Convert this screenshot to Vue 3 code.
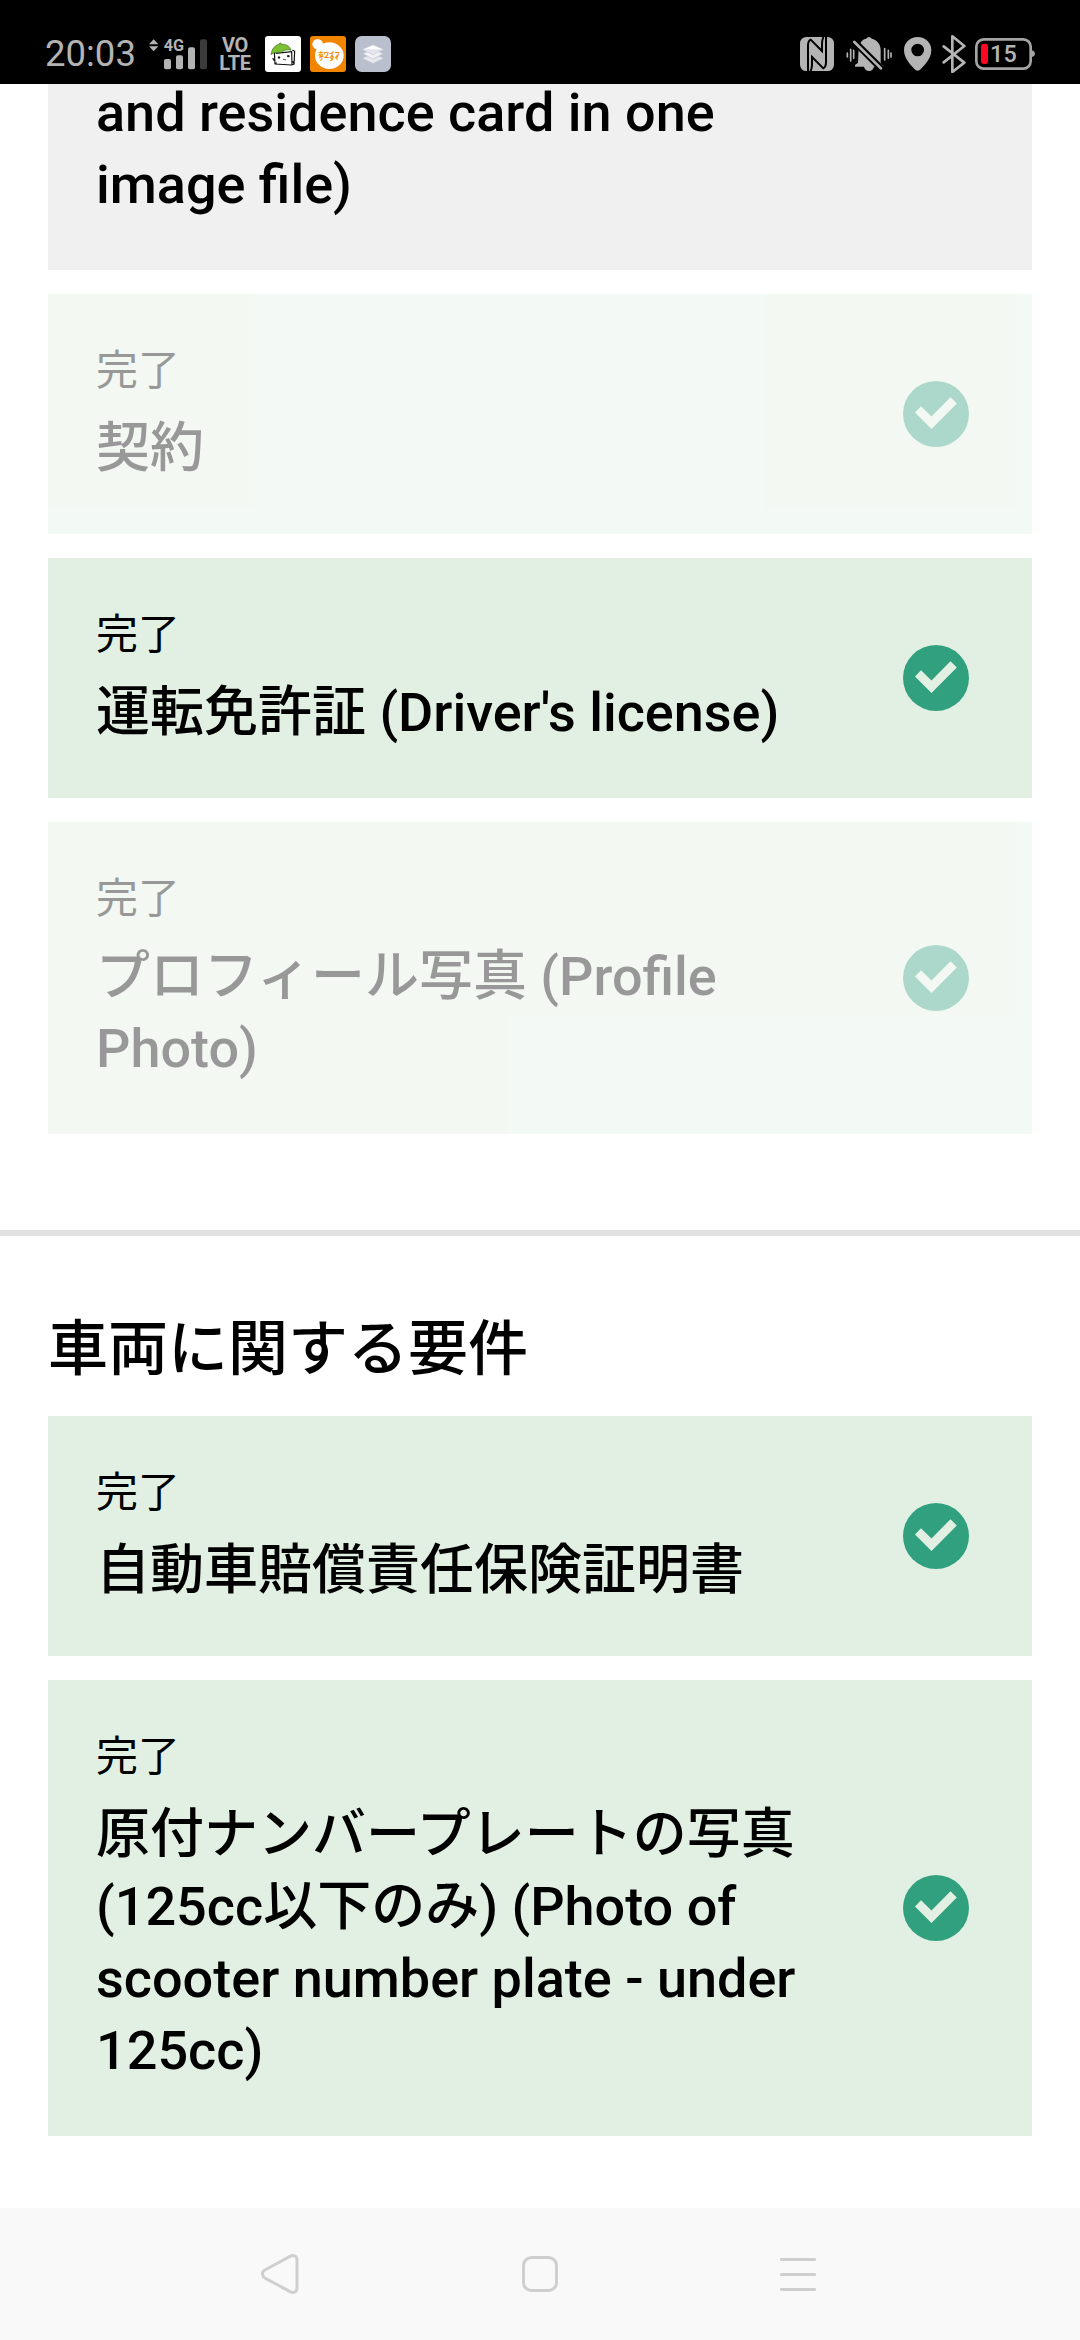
<script setup>
const driverItems = [
  { title: '契約', faded: true },
  { title: "運転免許証 (Driver's license)", faded: false },
  { title: 'プロフィール写真 (Profile Photo)', faded: true },
]
const vehicleItems = [
  { title: '自動車賠償責任保険証明書', faded: false },
  { title: '原付ナンバープレートの写真 (125cc以下のみ) (Photo of scooter number plate - under 125cc)', faded: false },
]
</script>

<template>
  <div class="screen" lang="ja">
    <header class="status">
      <div class="status-left">
        <span class="clock">20:03</span>
        <svg class="signal" width="59" height="34" viewBox="357 50 177 102">
          <g fill="#b4b4b4">
            <path d="M357 72l14-15 14 15zM357 78h28l-14 15z" />
            <rect x="402" y="116" width="21" height="31" rx="6" />
            <rect x="438" y="105" width="21" height="42" rx="6" />
            <rect x="474" y="81" width="21" height="66" rx="6" />
            <text x="401" y="93" font-size="51" font-weight="700" textLength="61" lengthAdjust="spacingAndGlyphs">4G</text>
          </g>
          <rect x="510" y="57" width="21" height="90" rx="6" fill="#3b3b3b" />
        </svg>
        <div class="volte">
          <span>VO</span>
          <span>LTE</span>
        </div>
        <div class="apps">
          <svg width="36" height="36" viewBox="75 48 108 108">
            <rect x="75" y="48" width="108" height="108" rx="9" fill="#fff" />
            <path d="M103 96l2 36 50 3 7-3 2-38-7-4M107 100l48-5 1 40M105 132l5-4M98 114l5 8M158 124l5 8" fill="none" stroke="#111" stroke-width="3.5" />
            <path d="M93 104c2-22 19-31 25-31v-3l5-1 1 4c13-1 26 5 29 18-12-5-25 2-31 7-8-3-21-1-29 6z" fill="#7ac231" stroke="#234a0c" stroke-width="1.5" />
            <path d="M114 110h6v5h-6zM142 106h6v5h-6zM128 120l4-3 3 4 4-3" fill="#111" stroke="#111" stroke-width="1" />
          </svg>
          <svg width="36" height="36" viewBox="210 48 108 108">
            <rect x="210" y="48" width="108" height="108" rx="9" fill="#f28500" />
            <circle cx="233" cy="73" r="16" fill="#fff" />
            <ellipse cx="268" cy="107" rx="43" ry="40" fill="#fff" />
            <g fill="#f28500" class="jp" font-weight="900">
              <text x="235" y="107" font-size="17" textLength="65" lengthAdjust="spacingAndGlyphs">ホワイフ</text>
              <text x="237" y="121" font-size="16" textLength="61" lengthAdjust="spacingAndGlyphs">ケータイ</text>
            </g>
          </svg>
          <svg width="36" height="36" viewBox="345 48 108 108">
            <rect x="345" y="48" width="108" height="108" rx="20" fill="#b9bfcc" />
            <path d="M368 115l31-14 31 14-31 15z" fill="#e6e8ed" />
            <path d="M368 101l31-14 31 14-31 16z" fill="#f1f2f5" stroke="#b9bfcc" stroke-width="2" />
            <path d="M367 88l32-14 32 14-32 16z" fill="#fff" stroke="#b9bfcc" stroke-width="2" />
            <path d="M367 88h64l-32 15z" fill="#e2e5eb" />
          </svg>
        </div>
      </div>
      <div class="status-right">
        <svg width="34" height="34" viewBox="60 51 102 102">
          <rect x="60" y="51" width="102" height="102" rx="19" fill="#b4b4b4" />
          <path d="M84 153V77q0-14 8-18l34 34V75q0-18 5-24M138 51v76q0 14-8 18L96 111v18q0 18-5 24" fill="none" stroke="#000" stroke-width="6" />
        </svg>
        <svg width="46" height="34" viewBox="198 51 138 102">
          <path d="M236 82c5-19 15-25 22-26q8-10 18 0c18 5 26 19 26 35v38l8 9v2h-28q-4 13-15 13t-15-13h-27v-5l9-7z" fill="#b4b4b4" />
          <path d="M214 56l92 92" stroke="#000" stroke-width="20" />
          <path d="M223 66l80 79" stroke="#b4b4b4" stroke-width="8" stroke-linecap="round" />
          <path d="M202 99v12M212 88v35M221 91v24M314 86v34M325 91v24M333 99v12" stroke="#b4b4b4" stroke-width="5" stroke-linecap="round" />
        </svg>
        <svg width="28" height="34" viewBox="371 51 84 102">
          <path fill-rule="evenodd" d="M412 51c23 0 41 17 41 39 0 30-28 53-35 60q-6 5-12 0c-7-7-35-30-35-60 0-22 18-39 41-39zm0 20a19 19 0 1 0 0 38 19 19 0 0 0 0-38z" fill="#b4b4b4" />
        </svg>
        <svg class="bluetooth" width="25" height="38" viewBox="487 44 75 114">
          <path d="M492 78l62 49-36 28V48l36 29-62 49" fill="none" stroke="#b4b4b4" stroke-width="8" stroke-linejoin="round" stroke-linecap="round" />
        </svg>
        <svg class="battery" width="60" height="34" viewBox="585 51 180 102">
          <rect x="589" y="58" width="163" height="88" rx="22" fill="none" stroke="#a4a4a4" stroke-width="8" />
          <path d="M756 91q9 3 9 10t-9 10z" fill="#a4a4a4" />
          <rect x="603" y="71" width="21" height="61" rx="9" fill="#ff0622" />
          <text x="630" y="126" font-size="70" font-weight="500" fill="#b4b4b4" textLength="80">15</text>
        </svg>
      </div>
    </header>

    <main class="content">
      <section class="group">
        <article class="card pending">
          <div class="text">
            <h3 class="title">and residence card in one image file)</h3>
          </div>
        </article>
        <article v-for="item in driverItems" :key="item.title" class="card" :class="{ faded: item.faded }">
          <div class="text">
            <p class="label">完了</p>
            <h3 class="title">{{ item.title }}</h3>
          </div>
          <svg class="check" viewBox="0 0 66 66">
            <circle cx="33" cy="33" r="33" fill="#31a07e" />
            <path d="M12 31.5l6-6.3L28.5 35.5 47.5 16.2l6.3 6.3L28.5 48z" fill="#e2f0e3" />
          </svg>
        </article>
      </section>

      <section class="group vehicle">
        <h2 class="heading">車両に関する要件</h2>
        <article v-for="item in vehicleItems" :key="item.title" class="card">
          <div class="text">
            <p class="label">完了</p>
            <h3 class="title">{{ item.title }}</h3>
          </div>
          <svg class="check" viewBox="0 0 66 66">
            <circle cx="33" cy="33" r="33" fill="#31a07e" />
            <path d="M12 31.5l6-6.3L28.5 35.5 47.5 16.2l6.3 6.3L28.5 48z" fill="#e2f0e3" />
          </svg>
        </article>
      </section>
    </main>

    <nav class="nav">
      <svg width="38" height="40" viewBox="0 0 38 40">
        <path d="M3 16.5L29.5 2.2Q32 1 34 2.2 36 3 36 6v28q0 3-2 3.8-2 1.2-4.5 0L3 23.5Q1.500 22 1.500 20T3 16.500z" fill="none" stroke="#cfcfcf" stroke-width="3" />
      </svg>
      <svg width="36" height="36" viewBox="0 0 36 36">
        <rect x="1.5" y="1.5" width="33" height="33" rx="8" fill="none" stroke="#cfcfcf" stroke-width="3" />
      </svg>
      <svg class="menu" width="36" height="33" viewBox="0 0 36 33" fill="#cfcfcf">
        <rect width="36" height="3" rx="1" />
        <rect y="15" width="36" height="3" rx="1" />
        <rect y="30" width="36" height="3" rx="1" />
      </svg>
    </nav>
  </div>
</template>

<style>
body {
  background: #fff;
}
</style>

<style scoped>
.screen {
  display: flex;
  flex-direction: column;
  width: 1080px;
  height: 2340px;
  overflow: hidden;
  background: #fff;
  color: #000;
  font-family: Roboto, "Noto Sans CJK JP", sans-serif;
}
svg {
  display: block;
  flex: none;
}
.status {
  display: flex;
  justify-content: space-between;
  align-items: center;
  box-sizing: border-box;
  flex: none;
  height: 84px;
  padding: 24px 45px 0;
  background: #000;
}
.status-left,
.status-right,
.apps {
  display: flex;
  align-items: center;
}
.clock {
  width: 104px;
  font-size: 36.5px;
  line-height: 36px;
  color: #b4b4b4;
}
.signal {
  overflow: visible;
}
.volte {
  display: flex;
  flex-direction: column;
  align-items: center;
  width: 34px;
  margin-left: 10px;
  font-size: 20px;
  font-weight: 700;
  line-height: 18px;
  letter-spacing: -0.3px;
  color: #b4b4b4;
}
.apps {
  gap: 9px;
  margin-left: 13px;
}
.jp {
  font-family: "Noto Sans CJK JP", sans-serif;
}
.status-right {
  gap: 12px;
}
.bluetooth {
  margin-left: -2px;
}
.battery {
  margin-left: -4px;
}
.content {
  flex: 1;
}
.group {
  display: flex;
  flex-direction: column;
  gap: 24px;
  padding: 0 48px 96px;
}
.vehicle {
  padding-top: 72px;
  padding-bottom: 0;
  border-top: 6px solid #e2e2e2;
}
.card {
  display: flex;
  align-items: center;
  justify-content: space-between;
  box-sizing: border-box;
  padding: 48px 63px 48px 48px;
  background: #e2f0e3;
}
.pending {
  align-items: flex-end;
  height: 186px;
  padding-top: 0;
  background: #f0f0f0;
}
.faded {
  opacity: 0.4;
}
.text {
  margin: -1px 0 1px;
}
.label,
.title,
.heading {
  margin: 0;
}
.label {
  margin-bottom: 12px;
  font-size: 42px;
  line-height: 60px;
}
.title {
  width: 738px;
  font-size: 54px;
  font-weight: 500;
  line-height: 72px;
}
.heading {
  font-size: 60px;
  font-weight: 500;
  line-height: 84px;
}
.check {
  width: 66px;
  height: 66px;
}
.nav {
  display: flex;
  align-items: center;
  justify-content: space-between;
  box-sizing: border-box;
  flex: none;
  height: 132px;
  padding: 0 264px 0 261px;
  background: #f9f9f9;
}
</style>
